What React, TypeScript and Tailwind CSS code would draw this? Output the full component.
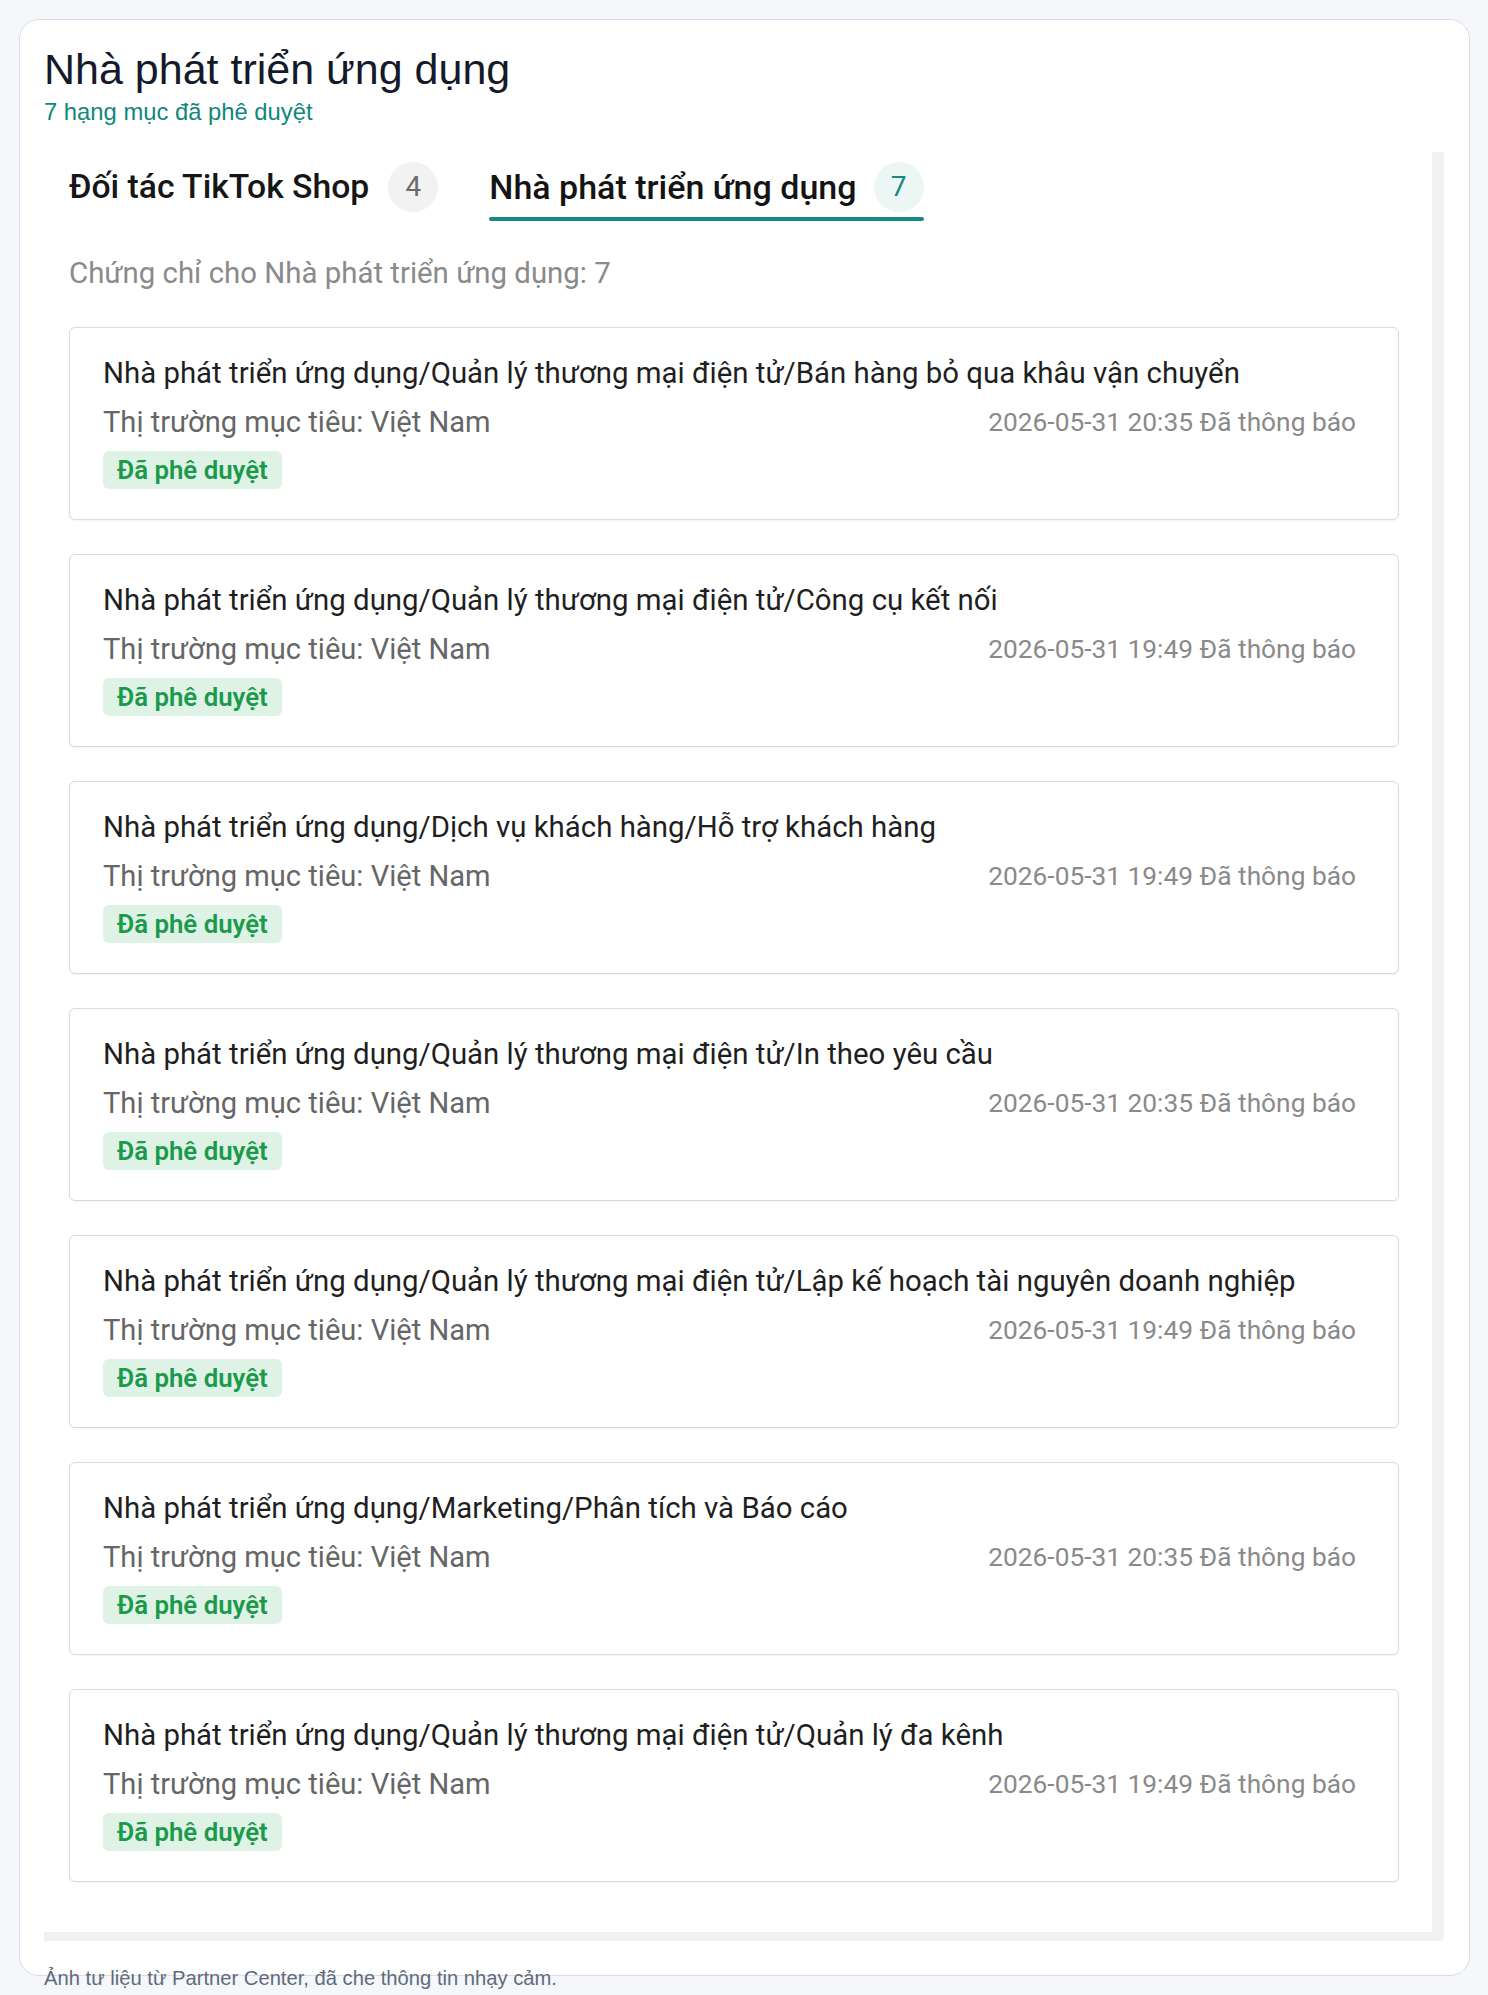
import React from "react";

type Cert = { path: string; time: string };

const certs: Cert[] = [
  { path: "Nhà phát triển ứng dụng/Quản lý thương mại điện tử/Bán hàng bỏ qua khâu vận chuyển", time: "2026-05-31 20:35" },
  { path: "Nhà phát triển ứng dụng/Quản lý thương mại điện tử/Công cụ kết nối", time: "2026-05-31 19:49" },
  { path: "Nhà phát triển ứng dụng/Dịch vụ khách hàng/Hỗ trợ khách hàng", time: "2026-05-31 19:49" },
  { path: "Nhà phát triển ứng dụng/Quản lý thương mại điện tử/In theo yêu cầu", time: "2026-05-31 20:35" },
  { path: "Nhà phát triển ứng dụng/Quản lý thương mại điện tử/Lập kế hoạch tài nguyên doanh nghiệp", time: "2026-05-31 19:49" },
  { path: "Nhà phát triển ứng dụng/Marketing/Phân tích và Báo cáo", time: "2026-05-31 20:35" },
  { path: "Nhà phát triển ứng dụng/Quản lý thương mại điện tử/Quản lý đa kênh", time: "2026-05-31 19:49" },
];

function CertCard({ cert }: { cert: Cert }) {
  return (
    <div className="flex flex-col rounded-[6px] border border-[#dadada] bg-white pl-[33px] pr-[42px] pt-[27px] pb-[30px] shadow-[0_1px_2px_rgba(0,0,0,0.05)]">
      <div className="text-[29.4px] leading-[36px] text-[#1f1f1f]">{cert.path}</div>
      <div className="mt-[13px] flex items-center justify-between leading-[36px]">
        <span className="text-[29.1px] text-[#666666]">Thị trường mục tiêu: Việt Nam</span>
        <span className="text-[26.3px] text-[#8a8a8a]">{cert.time} Đã thông báo</span>
      </div>
      <div className="mt-[11px] flex">
        <span className="flex h-[38px] items-center rounded-[6px] bg-[#dff2e6] px-[14px] text-[25.8px] font-semibold text-[#1b9a4b]">
          Đã phê duyệt
        </span>
      </div>
    </div>
  );
}

export default function App() {
  return (
    <div className="min-h-[1995px] bg-[#f5f7fb] pl-[19px] pr-[18px] pt-[19px] pb-[5px] font-['Liberation_Sans',Arial,sans-serif]">
      <div className="rounded-[20px] border border-[#d8dee8] bg-white pl-[24px] pr-[25px] pt-[23px] pb-[34px]">
        <h1 className="text-[43px] font-normal leading-[52px] text-[#151a2b]">Nhà phát triển ứng dụng</h1>
        <p className="mt-[3px] text-[23.8px] leading-[28px] text-[#10877b]">7 hạng mục đã phê duyệt</p>

        <div className="mt-[26px] rounded-br-[4px] border-b-[9px] border-r-[12px] border-[#f1f1f1] bg-white pl-[25px] pr-[33px] pt-[10px] pb-[50px] font-['Roboto',Arial,sans-serif]">
          <div className="flex items-start gap-[51px]">
            <div className="flex items-center">
              <span className="text-[33.7px] font-medium leading-[50px] text-[#161616]">Đối tác TikTok Shop</span>
              <span className="ml-[19px] flex h-[50px] w-[50px] items-center justify-center rounded-full bg-[#f2f2f2] text-[28px] text-[#6b6b6b]">
                4
              </span>
            </div>
            <div className="flex flex-col">
              <div className="flex items-center">
                <span className="text-[34px] font-medium leading-[50px] text-[#141414]">Nhà phát triển ứng dụng</span>
                <span className="ml-[17px] flex h-[50px] w-[50px] items-center justify-center rounded-full bg-[#ecf6f5] text-[28px] text-[#168a80]">
                  7
                </span>
              </div>
              <div className="mt-[5px] h-[4px] rounded-full bg-[#148a80]" />
            </div>
          </div>

          <div className="mt-[34px] text-[29.4px] leading-[36px] text-[#8a8a8a]">Chứng chỉ cho Nhà phát triển ứng dụng: 7</div>

          <div className="mt-[36px] flex flex-col gap-[34px]">
            {certs.map((c) => (
              <CertCard key={c.path} cert={c} />
            ))}
          </div>
        </div>
      </div>
      <p className="-mt-[10px] pl-[25px] text-[20.2px] leading-[24px] text-[#5f6b7c]">
        Ảnh tư liệu từ Partner Center, đã che thông tin nhạy cảm.
      </p>
    </div>
  );
}
